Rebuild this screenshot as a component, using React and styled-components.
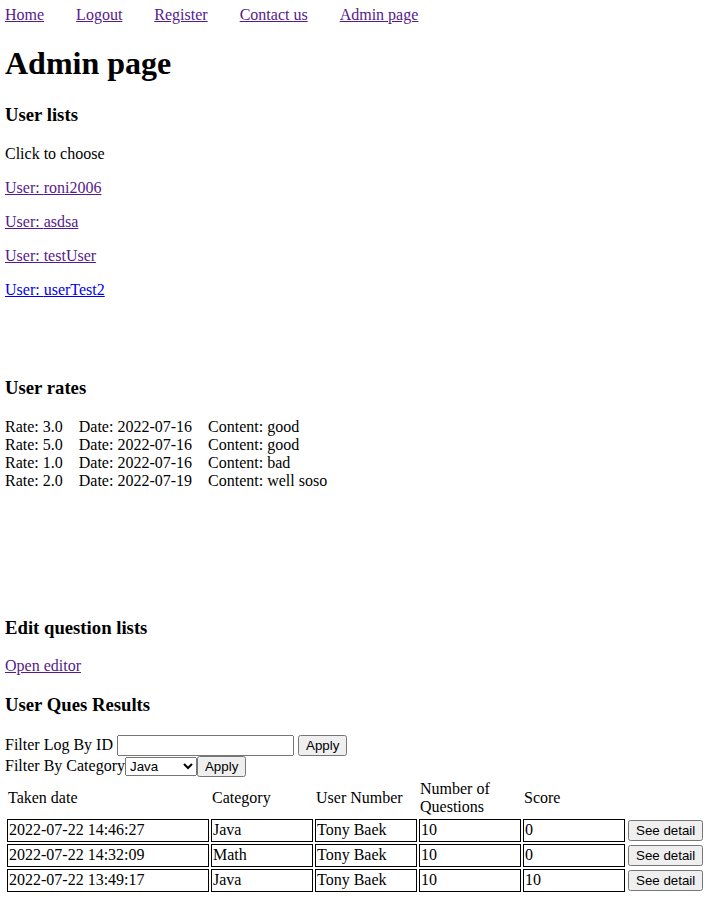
import React from "react";
import styled, { createGlobalStyle } from "styled-components";

const GlobalStyle = createGlobalStyle`
  body {
    margin: 6px 5px 5px;
    font-family: "Liberation Serif", "Times New Roman", serif;
    font-size: 16px;
    color: #000;
    background: #fff;
  }
`;

const Nav = styled.nav`
  display: flex;
  gap: 32px;
`;

const Link = styled.a`
  color: ${(p) => (p.$visited ? "#551A8B" : "#0000EE")};
  text-decoration: underline;
  cursor: pointer;
`;

const Title = styled.h1`
  font-size: 32px;
  font-weight: bold;
  margin: 21.44px 0;
`;

const SectionTitle = styled.h3`
  font-size: 18.72px;
  font-weight: bold;
  margin: 18.72px 0;
`;

const Section = styled.section`
  margin-bottom: ${(p) => p.$after || 0}px;
`;

const Para = styled.p`
  margin: 16px 0;
`;

const RateList = styled.div`
  margin: 19px 0 16px;
`;

const RateRow = styled.div`
  display: flex;
`;

const RateField = styled.span`
  margin-right: 16px;
`;

const FilterRow = styled.div``;

const TextInput = styled.input`
  font-family: "Liberation Sans", Arial, sans-serif;
  font-size: 13.333px;
  width: 177px;
  box-sizing: border-box;
`;

const Select = styled.select`
  font-family: "Liberation Sans", Arial, sans-serif;
  font-size: 13.333px;
  width: 72px;
`;

const Button = styled.button`
  font-family: "Liberation Sans", Arial, sans-serif;
  font-size: 13.333px;
`;

const Table = styled.table`
  border-spacing: 2px;
`;

const HeadCell = styled.th`
  font-weight: normal;
  text-align: left;
  padding: 1px;
  box-sizing: border-box;
  width: ${(p) => (p.$w ? `${p.$w}px` : "auto")};
`;

const Cell = styled.td`
  padding: 1px;
  border: ${(p) => (p.$plain ? "none" : "1px solid #000")};
`;

const users = [
  { name: "roni2006", visited: true },
  { name: "asdsa", visited: true },
  { name: "testUser", visited: true },
  { name: "userTest2", visited: false },
];

const rates = [
  ["3.0", "2022-07-16", "good"],
  ["5.0", "2022-07-16", "good"],
  ["1.0", "2022-07-16", "bad"],
  ["2.0", "2022-07-19", "well soso"],
];

const results = [
  ["2022-07-22 14:46:27", "Java", "Tony Baek", "10", "0"],
  ["2022-07-22 14:32:09", "Math", "Tony Baek", "10", "0"],
  ["2022-07-22 13:49:17", "Java", "Tony Baek", "10", "10"],
];

export default function App() {
  return (
    <>
      <GlobalStyle />
      <Nav>
        <Link $visited>Home</Link>
        <Link $visited>Logout</Link>
        <Link $visited>Register</Link>
        <Link $visited>Contact us</Link>
        <Link $visited>Admin page</Link>
      </Nav>
      <Title>Admin page</Title>

      <Section $after={78}>
        <SectionTitle>User lists</SectionTitle>
        <Para>Click to choose</Para>
        {users.map((u) => (
          <Para key={u.name}>
            <Link $visited={u.visited}>User: {u.name}</Link>
          </Para>
        ))}
      </Section>

      <Section $after={127}>
        <SectionTitle>User rates</SectionTitle>
        <RateList>
          {rates.map((r, i) => (
            <RateRow key={i}>
              <RateField>Rate: {r[0]}</RateField>
              <RateField>Date: {r[1]}</RateField>
              <RateField>Content: {r[2]}</RateField>
            </RateRow>
          ))}
        </RateList>
      </Section>

      <Section>
        <SectionTitle>Edit question lists</SectionTitle>
        <Para>
          <Link $visited>Open editor</Link>
        </Para>
      </Section>

      <Section>
        <SectionTitle>User Ques Results</SectionTitle>
        <FilterRow>
          Filter Log By ID <TextInput type="text" /> <Button>Apply</Button>
        </FilterRow>
        <FilterRow>
          Filter By Category<Select defaultValue="Java">
            <option>Java</option>
            <option>Math</option>
          </Select><Button>Apply</Button>
        </FilterRow>
        <Table>
          <thead>
            <tr>
              <HeadCell $w={202}>Taken date</HeadCell>
              <HeadCell $w={102}>Category</HeadCell>
              <HeadCell $w={102}>User Number</HeadCell>
              <HeadCell $w={102}>Number of Questions</HeadCell>
              <HeadCell $w={102}>Score</HeadCell>
              <HeadCell />
            </tr>
          </thead>
          <tbody>
            {results.map((r, i) => (
              <tr key={i}>
                {r.map((v, j) => (
                  <Cell key={j}>{v}</Cell>
                ))}
                <Cell $plain>
                  <Button>See detail</Button>
                </Cell>
              </tr>
            ))}
          </tbody>
        </Table>
      </Section>
    </>
  );
}
